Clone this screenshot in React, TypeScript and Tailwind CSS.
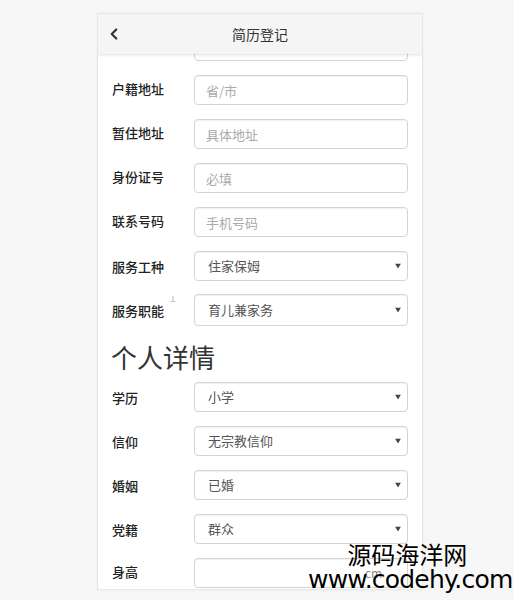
import { ChevronLeft } from "lucide-react";

const font = { fontFamily: '"Noto Sans CJK SC", "Noto Sans", sans-serif' };

function TextRow({ label, placeholder, suffix }: { label: string; placeholder?: string; suffix?: string }) {
  return (
    <div className="flex items-center h-[44px] px-[14px]">
      <label className="w-[82px] text-[13px] font-medium text-[#222] -mt-[3px]">{label}</label>
      <div className="relative flex-1 h-[30px]">
        <input
          className="w-full h-full border border-[#d4d4d4] rounded-[4px] px-[11px] text-[13px] text-[#555] placeholder:text-[#aaa] shadow-[inset_0_1px_1px_rgba(0,0,0,0.06)] outline-none"
          placeholder={placeholder}
        />
        {suffix && (
          <span className="absolute right-[26px] top-1/2 -translate-y-1/2 text-[12px] text-[#888]">{suffix}</span>
        )}
      </div>
    </div>
  );
}

function SelectRow({ label, value, tall, mark }: { label: string; value: string; tall?: boolean; mark?: boolean }) {
  return (
    <div className="flex items-center h-[44px] px-[14px]">
      <div className="relative w-[82px] -mt-[3px]">
        <span className="text-[13px] font-medium text-[#222]">{label}</span>
        {mark && (
          <svg className="absolute left-[58px] top-[-1px]" width="6" height="6" viewBox="0 0 6 6">
            <path d="M3 0v5M0.5 5.5h5" stroke="#c8c8c8" strokeWidth="1.2" />
          </svg>
        )}
      </div>
      <div
        className={`relative flex-1 ${tall ? "h-[32px]" : "h-[30px]"} border border-[#d4d4d4] rounded-[4px] shadow-[inset_0_1px_1px_rgba(0,0,0,0.06)] flex items-center pl-[13px]`}
      >
        <span className="text-[13px] text-[#555]">{value}</span>
        <svg className="absolute right-[6px] top-1/2 -translate-y-1/2" width="6" height="5" viewBox="0 0 6 5">
          <path d="M0 0h6L3 5z" fill="#444" />
        </svg>
      </div>
    </div>
  );
}

export default function App() {
  return (
    <div className="relative w-[514px] h-[600px] bg-[#f7f7f7] overflow-hidden" style={font}>
      <div className="absolute left-[97px] top-[13px] w-[326px] h-[577px] bg-white border border-[#e6e6e6] overflow-hidden shadow-[0_0_3px_rgba(0,0,0,0.05)] flex flex-col">
        <div className="relative z-10 h-[40px] shrink-0 bg-[#f5f5f5] flex items-center justify-center shadow-[0_1px_3px_rgba(0,0,0,0.12)]">
          <ChevronLeft className="absolute left-[7px] top-1/2 -translate-y-1/2 text-[#333]" size={18} strokeWidth={3} />
          <span className="text-[14px] text-[#333]">简历登记</span>
        </div>

        <div className="flex flex-col -mt-[30px]">
          <TextRow label="" placeholder="" />
          <TextRow label="户籍地址" placeholder="省/市" />
          <TextRow label="暂住地址" placeholder="具体地址" />
          <TextRow label="身份证号" placeholder="必填" />
          <TextRow label="联系号码" placeholder="手机号码" />
          <SelectRow label="服务工种" value="住家保姆" />
          <SelectRow label="服务职能" value="育儿兼家务" tall mark />

          <h2 className="px-[13px] pt-[12px] pb-[5px] text-[26px] leading-[26px] text-[#333] font-normal">个人详情</h2>

          <SelectRow label="学历" value="小学" />
          <SelectRow label="信仰" value="无宗教信仰" />
          <SelectRow label="婚姻" value="已婚" />
          <SelectRow label="党籍" value="群众" />
          <TextRow label="身高" suffix="cm" />
        </div>
      </div>

      <div
        className="absolute left-[308px] top-[541px] flex flex-col items-center text-black leading-none"
        style={{ fontFamily: '"Noto Sans CJK SC", "Liberation Sans", sans-serif' }}
      >
        <span className="text-[24px] leading-[26px] -ml-[6px]">源码海洋网</span>
        <span className="text-[25px] leading-[26px]" style={{ fontFamily: '"DejaVu Sans", "Liberation Sans", sans-serif', letterSpacing: "-0.8px" }}>
          www.codehy.com
        </span>
      </div>
    </div>
  );
}
